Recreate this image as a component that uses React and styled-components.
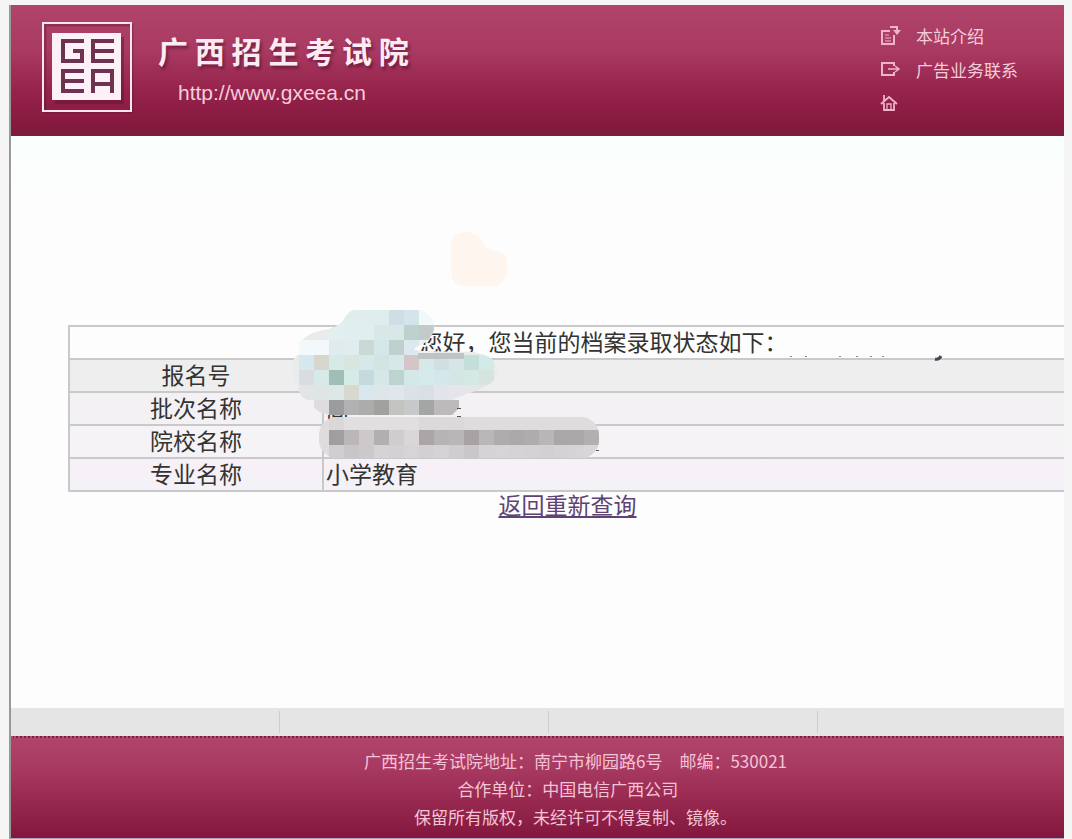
import React from 'react';
import styled, { createGlobalStyle } from 'styled-components';

const GlobalStyle = createGlobalStyle`
  * {
    box-sizing: border-box;
  }

  body {
    margin: 0;
    background: #f5f5f5;
    font-family: "Noto Sans CJK SC", sans-serif;
    overflow: hidden;
  }
`;

const Frame = styled.div`
  margin: 5px 8px 0 9px;
  border-left: 2px solid #999;
  background: #fdfdfd;
  overflow: hidden;
`;

// the site is wider than a small window, the frame cuts its right side
const Site = styled.div`
  min-width: 1129px;
`;

const Header = styled.header`
  height: 131px;
  display: flex;
  justify-content: space-between;
  align-items: flex-start;
  padding: 13px 0 0 29px;
  background: linear-gradient(#b0446a 0%, #a93a62 35%, #96234c 65%, #87193f 90%, #7b1b3d 100%);
`;

const Brand = styled.a`
  display: flex;
  gap: 24px;
  padding-top: 2px;
  color: #fdebf3;
  text-decoration: none;
`;

const BrandText = styled.div`
  padding-top: 8px;
`;

const SiteName = styled.h1`
  margin: 0;
  font-size: 30px;
  line-height: 44px;
  font-weight: 700;
  white-space: nowrap;
  text-shadow: 2px 3px 3px rgba(70, 10, 40, 0.5);
`;

const SiteUrl = styled.div`
  padding-left: 20px;
  font-family: "Liberation Sans", sans-serif;
  font-size: 21px;
  line-height: 42px;
  color: #f3cddb;
`;

const TopLinks = styled.nav`
  width: 260px;
`;

const TopLink = styled.a`
  display: flex;
  align-items: center;
  gap: 14px;
  height: 34px;
  font-size: 17px;
  color: #f3cddb;
  text-decoration: none;
`;

const Main = styled.main`
  position: relative;
  min-height: 572px;
  padding: 189px 73px 0 57px;
  background: linear-gradient(#f9fffd 0, #fdfdfd 60px);
`;

const Splash = styled.svg`
  position: absolute;
  left: 438px;
  top: 94px;
`;

const ResultBox = styled.div`
  position: relative;
  color: #333;
  font-size: 23px;
  line-height: 24px;
`;

const ResultTable = styled.table`
  width: 100%;
  table-layout: fixed;
  border-collapse: collapse;

  th,
  td {
    height: 33px;
    padding: 0 2px 3px;
    border: 2px solid #c9c8ca;
    font-weight: 400;
    text-align: left;
    white-space: nowrap;
  }
`;

const Row = styled.tr`
  background: ${({ $tone }) => $tone};

  th {
    text-align: center;
  }
`;

const LabelCol = styled.col`
  width: 254px;
`;

const HiddenName = styled.span`
  display: inline-block;
  width: 72px;
`;

const Mosaic = styled.svg`
  position: absolute;
  left: 222px;
  top: -20px;
`;

const BackLink = styled.a`
  display: block;
  width: max-content;
  margin: 0 auto;
  color: #5f4372;
  text-decoration: underline;
  text-underline-offset: 2px;
`;

const Strip = styled.div`
  height: 28px;
  display: grid;
  grid-template-columns: repeat(4, 269px) 1fr;
  background: #e5e5e5;
`;

const StripCell = styled.div`
  margin: 3px 0;
  border-right: 1px solid #cfcccd;
`;

const Footer = styled.footer`
  padding: 9px 0 7px;
  border-top: 2px dotted #a8597a;
  border-bottom: 1px solid #a9a3bb;
  background: linear-gradient(#b0446a 0%, #a83a61 30%, #962850 65%, #84173d 100%);
  color: #f5c3d6;
  font-size: 17px;
  text-align: center;

  p {
    margin: 0;
    line-height: 28px;
  }
`;

const rows = [
  { label: '报名号', value: '', tone: '#eeeeee' },
  { label: '批次名称', value: '高', tone: '#f3f1f3' },
  { label: '院校名称', value: '', tone: '#f5f3f6' },
  { label: '专业名称', value: '小学教育', tone: 'linear-gradient(#f8f0f6, #f3f2f7)' },
];

const CELL = 15;

// each band: first column, y, colours
const topBands = [
  [3, 5, 'e0eded e0eded e0eded cddfe4 d5e4ea f1f8f8'],
  [2, 20, 'e3eeee dfeeee dfeeee d8e7e8 d8e7e8 bdd2cc c4cac9'],
  [0, 35, 'f3f9fa f3f9fa dfebed e0edef c8dad3 d5e8e9 bed1cd dbe9ee edf3f4'],
  [0, 50, 'd6e8ee d6d6ce d6eae8 d9e5df d7e8ea d5e3e2 d7e8ea d6c5c6 d5eae8 d0dfdf d6e6e8 c4ded9 d3ebe8'],
  [0, 65, 'dadce0 d6ebe8 a1bdb7 d5ebe8 c4dadf d5e7e7 bdd3cd d4e8ea d6e9eb d2e8ec d5e5e1 d4e9e4 d6e3de'],
  [0, 80, 'e1e5e5 dfe5e5 dce7e7 d9d8cf d8e8ee dfe6ea dfe6ec dae2e6 d9e0e3 e3e4ea e5e6ea e5e6ea e5e6ea'],
  [1, 95, 'dedcdf 9b9c9e b1b1b4 acacad a1a19f c3c4bf c6c9c7 a2a6a4 bdbabb bcb9ba'],
];

const bottomBands = [
  [2, 110, 'd9d7d8 e2dfe0 e2dfe0 e2dfe0 e2dfe0 e2dfe0 dcd9da dcd9da dcd9da'],
  [2, 125, 'a19e9f bbb7b8 cdc9ca b2afb0 d0cdce dbd7d8 aaa6a8 b7b4b5 bab6b7 a7a3a5 bbb7b8 afacad aca9aa afacad b9b6b7 aaa7a8 aca8aa b2afb0'],
  [2, 140, 'd0ced0 c8c6c7 cbc9ca d5d3d4 d3d1d3 d6d4d6 d2d0d2 d5d3d5 cfcdcf c9c7c9 d5d3d5 d6d4d6 d5d3d5 d4d2d4 d2d0d2 d4d2d4 d6d4d6 d8d6d9'],
];

const Band = ({ band }) => {
  const [start, y, colors] = band;
  return colors.split(' ').map((c, i) => (
    <rect key={i} x={9 + (start + i) * CELL} y={y} width={CELL} height={CELL} fill={`#${c}`} />
  ));
};

const NameMosaic = () => (
  <Mosaic width="660" height="160" viewBox="0 0 660 160" shapeRendering="crispEdges" aria-hidden="true">
    <defs>
      <clipPath id="cloud">
        <path d="M64 5H130Q144 10 144 25Q141 36 128 41Q120 45 130 46L184 47Q208 52 208 66Q208 76 190 84L166 93L163 95H169V103L162 110H40Q28 108 24 102V95H17Q9 92 9 82Q2 73 2 61Q3 52 9 49V38Q20 26 39 24Q50 21 54 14Q58 7 64 5Z" />
      </clipPath>
      <clipPath id="pill">
        <rect x="29" y="112" width="280" height="41" rx="18" />
      </clipPath>
    </defs>
    <g clipPath="url(#cloud)">
      <rect width="220" height="112" fill="#e9eceb" />
      {topBands.map((band) => (
        <Band key={band[1]} band={band} />
      ))}
    </g>
    <g clipPath="url(#pill)">
      <rect x="29" y="112" width="280" height="42" fill="#dfdcde" />
      {bottomBands.map((band) => (
        <Band key={band[1]} band={band} />
      ))}
    </g>
    <path d="M128 48H174V54H128Z" fill="#bfc3c3" />
    <path d="M167 103H171M167 111H171M306 145H309" stroke="#555" strokeWidth="1" />
    <path d="M500 51h2M515 51h2M549 51h2M566 51h2M580 51h2M592 51h2" stroke="#8b8f95" />
    <path d="M645 54Q649 55 651 51" fill="none" stroke="#444a55" strokeWidth="3" shapeRendering="auto" />
  </Mosaic>
);

const Logo = () => (
  <svg width="94" height="94" viewBox="0 0 94 94" role="img" aria-label="GEEA">
    <g fill="none" stroke="#5c1236" strokeOpacity="0.35" strokeWidth="3">
      <rect x="5" y="5" width="87" height="87" />
    </g>
    <rect x="3" y="3" width="88" height="88" fill="none" stroke="#fbe6ef" strokeWidth="2" />
    <rect x="15" y="17" width="69" height="67" fill="#5c1236" opacity="0.45" />
    <rect x="12" y="13" width="69" height="67" fill="#fdf0f6" />
    <g fill="none" stroke="#6e3350" strokeWidth="4">
      <path d="M44 21H23V41H42V31H33" />
      <path d="M74 21H53V41H74M53 31H74" />
      <path d="M44 51H23V71H44M23 61H44" />
      <path d="M53 73V51H72V73M53 64H72" />
    </g>
  </svg>
);

const IntroIcon = () => (
  <svg width="22" height="22" viewBox="0 0 22 22" fill="none" stroke="#f0b3cb" strokeWidth="2" aria-hidden="true">
    <path d="M10 7H2V20H14V11" />
    <path d="M5 11H9M5 14H11M5 17H11" strokeWidth="1" />
    <path d="M10 3H17V8" />
    <path d="M13 6H21L17 11Z" fill="#f0b3cb" stroke="none" />
  </svg>
);

const ContactIcon = () => (
  <svg width="22" height="22" viewBox="0 0 22 22" fill="none" stroke="#f0b3cb" strokeWidth="2" aria-hidden="true">
    <path d="M14 8V5H2V17H14V14" />
    <path d="M8 11H18M15 8L19 11L15 14" strokeWidth="1.5" />
  </svg>
);

const HomeIcon = () => (
  <svg width="22" height="22" viewBox="0 0 22 22" fill="none" stroke="#f0b3cb" strokeWidth="1.8" aria-hidden="true">
    <path d="M1 12L9 5L17 12M4 11V18H14V11M4 9V3" />
    <path d="M7 18V12H11V18" strokeWidth="1.3" />
  </svg>
);

const App = () => {
  return (
    <>
      <GlobalStyle />
      <Frame>
        <Site>
          <Header>
            <Brand href="#">
              <Logo />
              <BrandText>
                <SiteName>广 西 招 生 考 试 院</SiteName>
                <SiteUrl>http://www.gxeea.cn</SiteUrl>
              </BrandText>
            </Brand>
            <TopLinks>
              <TopLink href="#"><IntroIcon />本站介绍</TopLink>
              <TopLink href="#"><ContactIcon />广告业务联系</TopLink>
              <TopLink href="#" aria-label="首页"><HomeIcon /></TopLink>
            </TopLinks>
          </Header>

          <Main>
            <Splash width="60" height="60" viewBox="0 0 60 60" aria-hidden="true">
              <path d="M2 12Q4 3 16 2Q30 2 34 14Q38 20 48 21Q58 23 58 34Q58 54 46 56H14Q2 55 2 40Z" fill="#fff5ef" />
            </Splash>
            <ResultBox>
              <ResultTable>
                <colgroup>
                  <LabelCol />
                  <col />
                </colgroup>
                <tbody>
                  <Row $tone="#fdfdfd">
                    <th colSpan={2}><HiddenName />您好，您当前的档案录取状态如下：</th>
                  </Row>
                  {rows.map(({ label, value, tone }) => (
                    <Row key={label} $tone={tone}>
                      <th scope="row">{label}</th>
                      <td>{value}</td>
                    </Row>
                  ))}
                </tbody>
              </ResultTable>
              <NameMosaic />
              <BackLink href="#">返回重新查询</BackLink>
            </ResultBox>
          </Main>

          <Strip>
            <StripCell />
            <StripCell />
            <StripCell />
            <StripCell />
          </Strip>
          <Footer>
            <p>广西招生考试院地址：南宁市柳园路6号　邮编：530021</p>
            <p>合作单位：中国电信广西公司&nbsp;&nbsp;&nbsp;&nbsp;</p>
            <p>保留所有版权，未经许可不得复制、镜像。</p>
          </Footer>
        </Site>
      </Frame>
    </>
  );
};

export default App;
